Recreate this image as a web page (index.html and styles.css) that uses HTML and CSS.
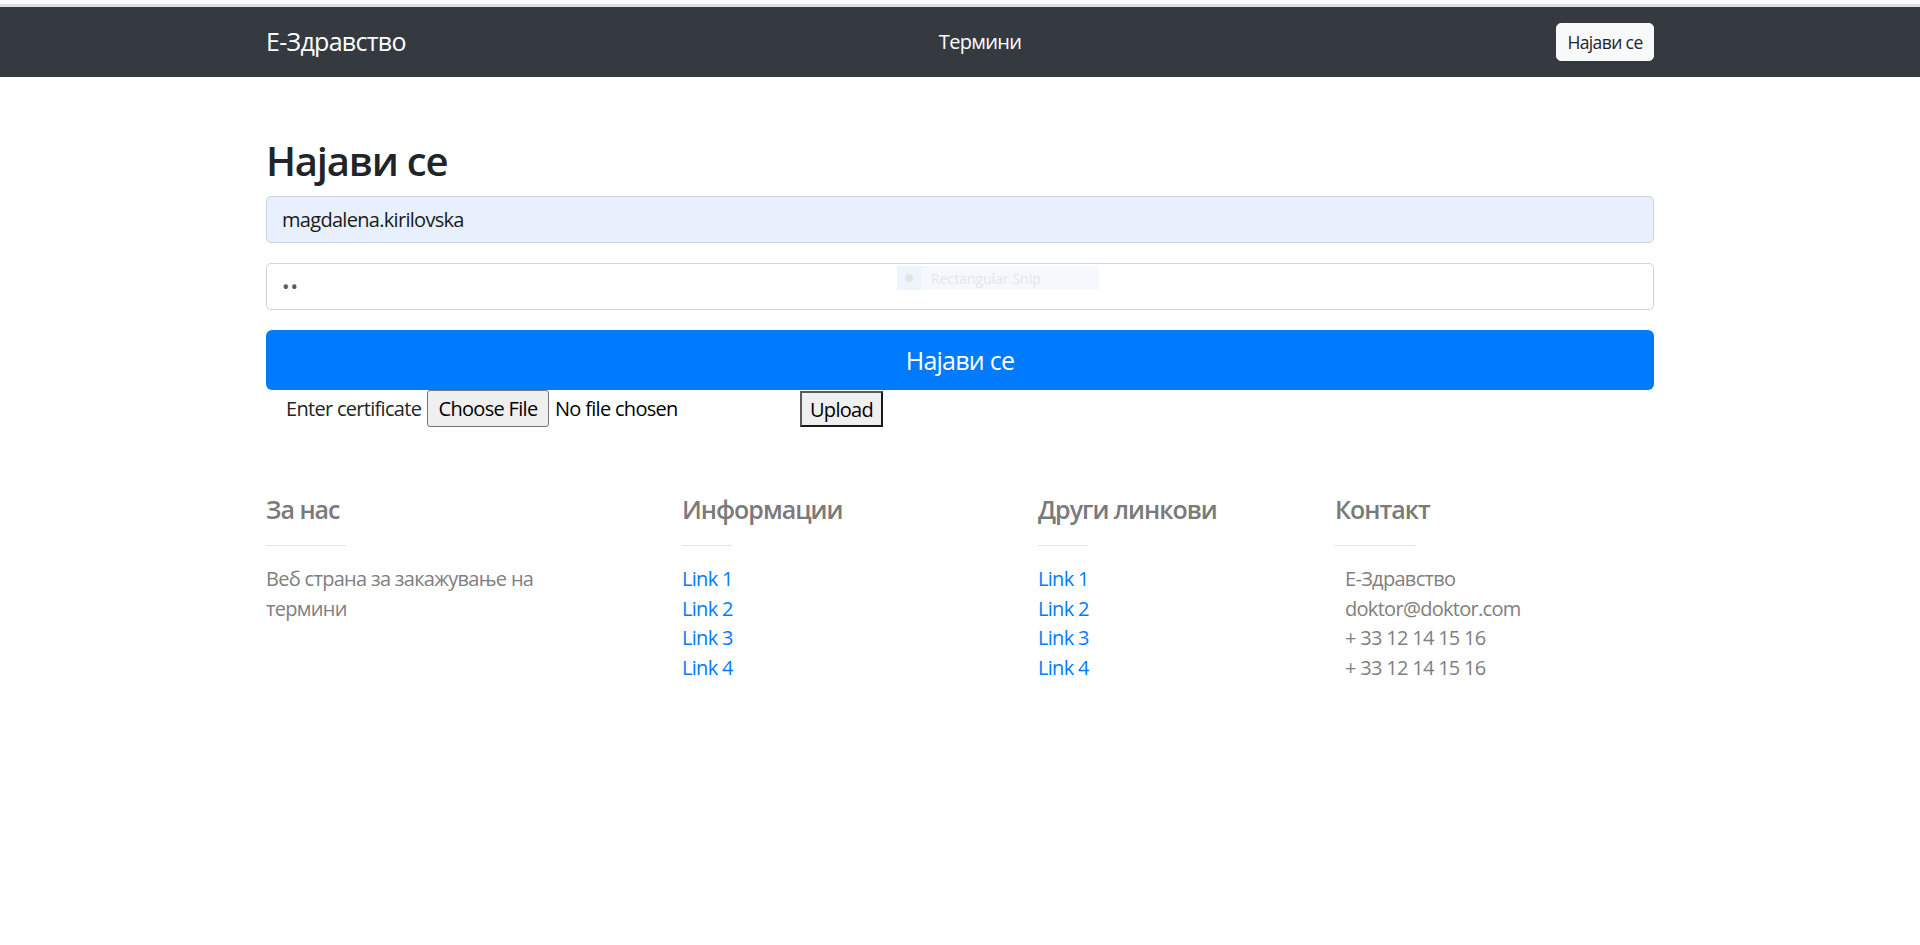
FILE: index.html
```html
<!DOCTYPE html>
<html lang="mk">
<head>
<meta charset="utf-8">
<title>Најави се</title>
<link rel="stylesheet" href="styles.css">
</head>
<body>
<div class="topline"></div>
<header class="navbar">
  <div class="container nav-inner">
    <a class="brand" href="#">Е-Здравство</a>
    <nav class="nav-center"><a class="nav-link" href="#">Термини</a></nav>
    <div class="nav-right"><button class="btn-nav" type="button">Најави се</button></div>
  </div>
</header>

<main class="container main">
  <h1 class="title">Најави се</h1>
  <form class="login-form">
    <input class="field field-autofill" type="text" value="magdalena.kirilovska">
    <input class="field field-pass" type="password" value="12">
    <button class="btn-submit" type="button">Најави се</button>
  </form>
  <div class="cert-row">
    <span class="cert-label">Enter certificate</span>
    <span class="file-input"><span class="file-btn">Choose File</span><span class="file-name">No file chosen</span></span>
    <button class="upload-btn" type="button">Upload</button>
  </div>
</main>

<footer class="container footer">
  <div class="fcol">
    <h5 class="fhead">За нас</h5>
    <hr class="fline wide">
    <p class="ftext about">Веб страна за закажување на термини</p>
  </div>
  <div class="fcol">
    <h5 class="fhead">Информации</h5>
    <hr class="fline narrow">
    <ul class="flist">
      <li><a href="#">Link 1</a></li>
      <li><a href="#">Link 2</a></li>
      <li><a href="#">Link 3</a></li>
      <li><a href="#">Link 4</a></li>
    </ul>
  </div>
  <div class="fcol">
    <h5 class="fhead">Други линкови</h5>
    <hr class="fline narrow">
    <ul class="flist">
      <li><a href="#">Link 1</a></li>
      <li><a href="#">Link 2</a></li>
      <li><a href="#">Link 3</a></li>
      <li><a href="#">Link 4</a></li>
    </ul>
  </div>
  <div class="fcol">
    <h5 class="fhead">Контакт</h5>
    <hr class="fline wide">
    <ul class="flist contact">
      <li>Е-Здравство</li>
      <li>doktor@doktor.com</li>
      <li>+ 33 12 14 15 16</li>
      <li>+ 33 12 14 15 16</li>
    </ul>
  </div>
</footer>

<div class="snip-tip"><span class="snip-icon"><span class="snip-dot"></span></span><span class="snip-text">Rectangular Snip</span></div>
</body>
</html>
```

FILE: styles.css
```css
* { box-sizing: border-box; }

html, body {
  margin: 0;
  padding: 0;
  background: #fff;
}

body {
  position: relative;
  padding-top: 4px;
  font-family: "Open Sans", "Noto Sans", sans-serif;
  font-size: 20px;
  line-height: 1.5;
  letter-spacing: -0.035em;
  color: #212529;
}

.topline {
  height: 3px;
  background: #dedede;
}

.container {
  width: 1388px;
  margin: 0 auto;
}

/* navbar */
.navbar {
  height: 70px;
  background: #343a40;
}

.nav-inner {
  height: 100%;
  display: grid;
  grid-template-columns: 1fr auto 1fr;
  align-items: center;
}

.brand {
  font-size: 25px;
  color: #fff;
  text-decoration: none;
  justify-self: start;
}

.nav-center {
  padding-left: 40px;
}

.nav-link {
  color: #fff;
  text-decoration: none;
  font-size: 20px;
}

.nav-right {
  justify-self: end;
}

.btn-nav {
  width: 98px;
  height: 38px;
  padding: 0;
  border: 1px solid #f8f9fa;
  border-radius: 5px;
  background: #f8f9fa;
  color: #212529;
  font-family: inherit;
  font-size: 17.5px;
  letter-spacing: -0.035em;
  display: block;
}

/* main */
.main {
  padding-top: 60px;
}

.title {
  margin: 0 0 11px;
  font-size: 40px;
  line-height: 48px;
  font-weight: 600;
  letter-spacing: -0.03em;
  color: #212529;
}

.login-form {
  display: flex;
  flex-direction: column;
  gap: 20px;
}

.field {
  display: block;
  width: 100%;
  height: 47px;
  padding: 0 15px;
  border: 1px solid #ced4da;
  border-radius: 5px;
  background: #fff;
  font-family: inherit;
  font-size: 20px;
  letter-spacing: -0.035em;
  color: #495057;
  outline: none;
}

.field-autofill {
  background: #e8f0fe;
  color: #1a1a1a;
}

.field-pass {
  letter-spacing: 1px;
  font-size: 20px;
  color: #555b61;
}

.btn-submit {
  display: block;
  width: 100%;
  height: 60px;
  border: 0;
  border-radius: 6px;
  background: #007bff;
  color: #fff;
  font-family: inherit;
  font-size: 25px;
  letter-spacing: -0.03em;
  padding: 0;
}

.cert-row {
  display: flex;
  align-items: center;
  height: 37px;
  padding-left: 20px;
}

.cert-label {
  flex: 0 0 141px;
  color: #212529;
}

.file-input {
  flex: 0 0 373px;
  display: flex;
  align-items: center;
}

.file-btn {
  display: inline-flex;
  align-items: center;
  justify-content: center;
  width: 122px;
  height: 37px;
  border: 1px solid #767676;
  border-radius: 3px;
  background: #efefef;
  color: #000;
  margin-right: 6px;
}

.file-name {
  color: #000;
}

.upload-btn {
  width: 83px;
  height: 36px;
  padding: 0;
  margin-top: 1px;
  background: #efefef;
  border: 2px solid;
  border-color: #5a5a5a #1a1a1a #1a1a1a #5a5a5a;
  border-radius: 0;
  font-family: inherit;
  font-size: 20px;
  letter-spacing: -0.035em;
  color: #000;
}

/* footer */
.footer {
  margin-top: 67px;
  display: grid;
  grid-template-columns: 416px 356px 297px 1fr;
}

.fhead {
  margin: 0;
  font-size: 25px;
  line-height: 30px;
  font-weight: 600;
  letter-spacing: -0.04em;
  color: #7a7a7a;
}

.fline {
  margin: 21px 0 18px;
  height: 1px;
  border: 0;
  background: #e3e3e3;
}

.fline.wide { width: 80px; }
.fline.narrow { width: 50px; }

.ftext {
  margin: 0;
  color: #808080;
  line-height: 29.7px;
}

.about {
  max-width: 318px;
}

.flist {
  list-style: none;
  margin: 0;
  padding: 0;
  line-height: 29.7px;
}

.flist a {
  color: #007bff;
  text-decoration: none;
}

.contact {
  padding-left: 10px;
  color: #808080;
}

/* snipping tool tooltip overlay */
.snip-tip {
  position: absolute;
  left: 897px;
  top: 266px;
  width: 202px;
  height: 24px;
  display: flex;
  align-items: center;
  background: #f5f9fd;
}

.snip-icon {
  width: 24px;
  height: 24px;
  background: #eef4fb;
  display: flex;
  align-items: center;
  justify-content: center;
}

.snip-dot {
  width: 8px;
  height: 8px;
  border-radius: 50%;
  background: #e4e4e4;
}

.snip-text {
  margin-left: 10px;
  font-size: 14px;
  letter-spacing: 0;
  color: #e4e6e8;
}
```
